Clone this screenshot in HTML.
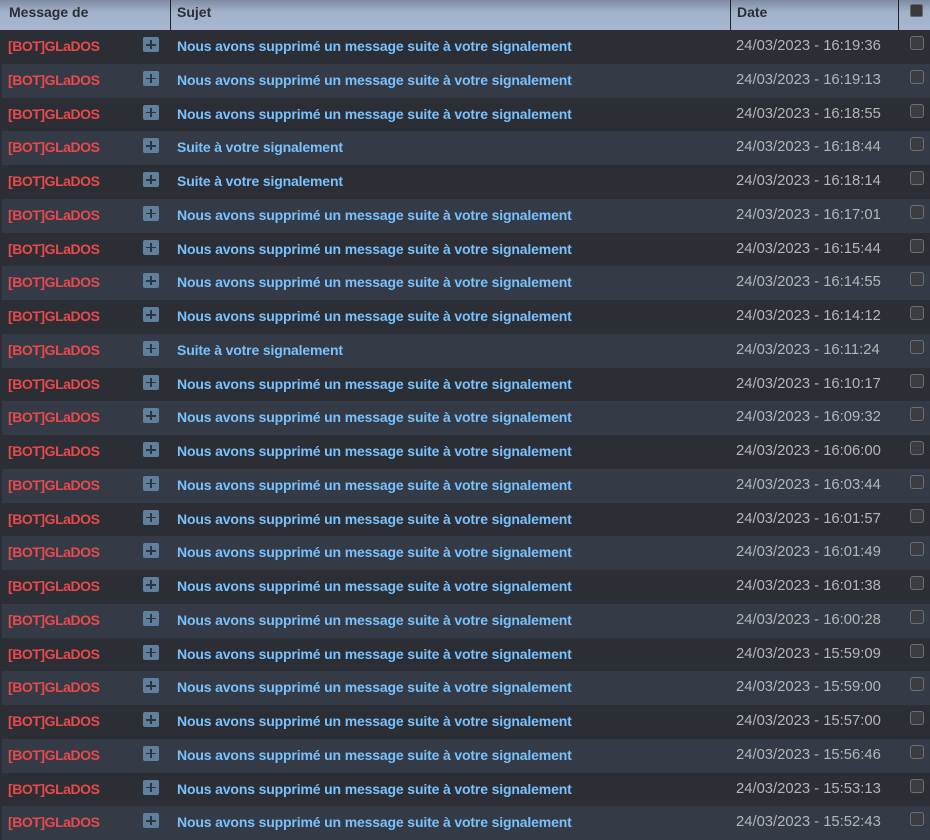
<!DOCTYPE html>
<html><head><meta charset="utf-8"><style>
*{margin:0;padding:0;box-sizing:border-box}
body{width:930px;height:834px;overflow:hidden;background:#2b2e35;font-family:"Liberation Sans",Arial,sans-serif;font-size:14px;position:relative}
.hd{position:absolute;left:0;top:0;width:930px;height:30px;background:linear-gradient(#7f8ba2,#a2b2cb 40%,#a6b6cf);color:#2a2e36;font-weight:bold;font-size:14px}
.hd span{position:absolute;top:4px}
.hd i{position:absolute;top:0;width:1px;height:30px;background:#222}
.rows{position:absolute;left:2px;top:30px;width:928px}
.r{height:33.75px;position:relative;background:#2b2e35}
.r:nth-child(even){background:#343b46}
.r span{position:absolute;top:8px;white-space:nowrap}
.a{left:6px;color:#e9494b;font-weight:bold;letter-spacing:-0.45px}
.p{position:absolute;left:141px;top:7px;width:16px;height:15px;background:#5f7f9c;border-radius:2px}
.p:before{content:"";position:absolute;left:3px;top:7px;width:10px;height:1.5px;background:#2c3440}
.p:after{content:"";position:absolute;left:7.25px;top:3px;width:1.5px;height:9px;background:#2c3440}
.s{left:175px;color:#7ac0fb;font-weight:bold;letter-spacing:-0.15px}
.d{left:734px;color:#b3b5b9;font-size:14.8px}
.c{position:absolute;left:908px;top:6px;width:14px;height:14px;border:1px solid #6b6e74;border-radius:3px;background:#3a3c40}
.hc{position:absolute;left:910px;top:4px;width:13px;height:13px;border:1px solid #666;border-radius:2px;background:#3a3b3e}
</style></head><body>
<div class="hd"><span style="left:9px">Message de</span><i style="left:170px"></i><span style="left:177px">Sujet</span><i style="left:730px"></i><span style="left:737px">Date</span><i style="left:898px"></i><div class="hc"></div></div>
<div class="rows">
<div class="r"><span class="a">[BOT]GLaDOS</span><div class="p"></div><span class="s">Nous avons supprimé un message suite à votre signalement</span><span class="d">24/03/2023 - 16:19:36</span><div class="c"></div></div>
<div class="r"><span class="a">[BOT]GLaDOS</span><div class="p"></div><span class="s">Nous avons supprimé un message suite à votre signalement</span><span class="d">24/03/2023 - 16:19:13</span><div class="c"></div></div>
<div class="r"><span class="a">[BOT]GLaDOS</span><div class="p"></div><span class="s">Nous avons supprimé un message suite à votre signalement</span><span class="d">24/03/2023 - 16:18:55</span><div class="c"></div></div>
<div class="r"><span class="a">[BOT]GLaDOS</span><div class="p"></div><span class="s">Suite à votre signalement</span><span class="d">24/03/2023 - 16:18:44</span><div class="c"></div></div>
<div class="r"><span class="a">[BOT]GLaDOS</span><div class="p"></div><span class="s">Suite à votre signalement</span><span class="d">24/03/2023 - 16:18:14</span><div class="c"></div></div>
<div class="r"><span class="a">[BOT]GLaDOS</span><div class="p"></div><span class="s">Nous avons supprimé un message suite à votre signalement</span><span class="d">24/03/2023 - 16:17:01</span><div class="c"></div></div>
<div class="r"><span class="a">[BOT]GLaDOS</span><div class="p"></div><span class="s">Nous avons supprimé un message suite à votre signalement</span><span class="d">24/03/2023 - 16:15:44</span><div class="c"></div></div>
<div class="r"><span class="a">[BOT]GLaDOS</span><div class="p"></div><span class="s">Nous avons supprimé un message suite à votre signalement</span><span class="d">24/03/2023 - 16:14:55</span><div class="c"></div></div>
<div class="r"><span class="a">[BOT]GLaDOS</span><div class="p"></div><span class="s">Nous avons supprimé un message suite à votre signalement</span><span class="d">24/03/2023 - 16:14:12</span><div class="c"></div></div>
<div class="r"><span class="a">[BOT]GLaDOS</span><div class="p"></div><span class="s">Suite à votre signalement</span><span class="d">24/03/2023 - 16:11:24</span><div class="c"></div></div>
<div class="r"><span class="a">[BOT]GLaDOS</span><div class="p"></div><span class="s">Nous avons supprimé un message suite à votre signalement</span><span class="d">24/03/2023 - 16:10:17</span><div class="c"></div></div>
<div class="r"><span class="a">[BOT]GLaDOS</span><div class="p"></div><span class="s">Nous avons supprimé un message suite à votre signalement</span><span class="d">24/03/2023 - 16:09:32</span><div class="c"></div></div>
<div class="r"><span class="a">[BOT]GLaDOS</span><div class="p"></div><span class="s">Nous avons supprimé un message suite à votre signalement</span><span class="d">24/03/2023 - 16:06:00</span><div class="c"></div></div>
<div class="r"><span class="a">[BOT]GLaDOS</span><div class="p"></div><span class="s">Nous avons supprimé un message suite à votre signalement</span><span class="d">24/03/2023 - 16:03:44</span><div class="c"></div></div>
<div class="r"><span class="a">[BOT]GLaDOS</span><div class="p"></div><span class="s">Nous avons supprimé un message suite à votre signalement</span><span class="d">24/03/2023 - 16:01:57</span><div class="c"></div></div>
<div class="r"><span class="a">[BOT]GLaDOS</span><div class="p"></div><span class="s">Nous avons supprimé un message suite à votre signalement</span><span class="d">24/03/2023 - 16:01:49</span><div class="c"></div></div>
<div class="r"><span class="a">[BOT]GLaDOS</span><div class="p"></div><span class="s">Nous avons supprimé un message suite à votre signalement</span><span class="d">24/03/2023 - 16:01:38</span><div class="c"></div></div>
<div class="r"><span class="a">[BOT]GLaDOS</span><div class="p"></div><span class="s">Nous avons supprimé un message suite à votre signalement</span><span class="d">24/03/2023 - 16:00:28</span><div class="c"></div></div>
<div class="r"><span class="a">[BOT]GLaDOS</span><div class="p"></div><span class="s">Nous avons supprimé un message suite à votre signalement</span><span class="d">24/03/2023 - 15:59:09</span><div class="c"></div></div>
<div class="r"><span class="a">[BOT]GLaDOS</span><div class="p"></div><span class="s">Nous avons supprimé un message suite à votre signalement</span><span class="d">24/03/2023 - 15:59:00</span><div class="c"></div></div>
<div class="r"><span class="a">[BOT]GLaDOS</span><div class="p"></div><span class="s">Nous avons supprimé un message suite à votre signalement</span><span class="d">24/03/2023 - 15:57:00</span><div class="c"></div></div>
<div class="r"><span class="a">[BOT]GLaDOS</span><div class="p"></div><span class="s">Nous avons supprimé un message suite à votre signalement</span><span class="d">24/03/2023 - 15:56:46</span><div class="c"></div></div>
<div class="r"><span class="a">[BOT]GLaDOS</span><div class="p"></div><span class="s">Nous avons supprimé un message suite à votre signalement</span><span class="d">24/03/2023 - 15:53:13</span><div class="c"></div></div>
<div class="r"><span class="a">[BOT]GLaDOS</span><div class="p"></div><span class="s">Nous avons supprimé un message suite à votre signalement</span><span class="d">24/03/2023 - 15:52:43</span><div class="c"></div></div>
</div>
</body></html>
